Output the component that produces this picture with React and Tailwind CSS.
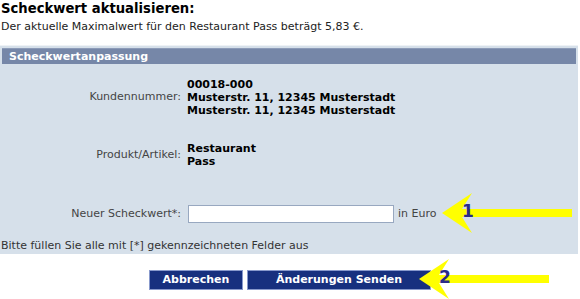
function Arrow({ label, className }) {
  return (
    <div className={`absolute ${className}`}>
      <svg width="130" height="40" viewBox="0 0 130 40">
        <polygon
          points="0,20 30,0 20,16 130,16 130,24 20,24 30,40"
          fill="#ffff00"
        />
      </svg>
      <span className="absolute left-[20px] top-[10px] text-[17px] font-bold leading-none text-[#2a2a8a]">
        {label}
      </span>
    </div>
  );
}

export default function App() {
  return (
    <div className="relative w-[580px] h-[299px] bg-white text-[11px] text-[#222] font-['DejaVu_Sans','Verdana',sans-serif] overflow-hidden">
      <h1 className="pl-[1px] text-[13.2px] font-bold leading-[18px] text-black">
        Scheckwert aktualisieren:
      </h1>
      <p className="pl-[1px] mt-[2px] leading-[14px]">
        Der aktuelle Maximalwert für den Restaurant Pass beträgt 5,83 €.
      </p>

      {/* Panel */}
      <div className="mt-[11px] w-[578px] bg-[#d6e0ea] border-t border-[#eef2f6] pt-[2px] pb-[1px]">
        <div className="mx-[2px] bg-[#7687a8] border-t border-[#8c9bb8] h-[16px] pl-[7px] text-[11px] font-bold leading-[15px] text-white">
          Scheckwertanpassung
        </div>

        <div className="mt-[14px] flex items-center">
          <div className="w-[184px] text-right pr-[3px] text-[#444]">Kundennummer:</div>
          <div className="ml-[3px] font-bold leading-[13px] text-black">
            <div>00018-000</div>
            <div>Musterstr. 11, 12345 Musterstadt</div>
            <div>Musterstr. 11, 12345 Musterstadt</div>
          </div>
        </div>

        <div className="mt-[25px] flex items-center">
          <div className="w-[184px] text-right pr-[3px] text-[#444]">Produkt/Artikel:</div>
          <div className="ml-[3px] font-bold leading-[13px] text-black">
            <div>Restaurant</div>
            <div>Pass</div>
          </div>
        </div>

        <div className="mt-[37px] flex items-center">
          <div className="w-[184px] text-right pr-[3px] text-[#444]">Neuer Scheckwert*:</div>
          <input
            type="text"
            className="ml-[4px] w-[206px] h-[18px] bg-white border border-[#98a8c0] outline-none"
          />
          <span className="ml-[4px] text-[#444]">in Euro</span>
        </div>

        <p className="mt-[16px] pl-[1px] leading-[14px] text-[#333]">
          Bitte füllen Sie alle mit [*] gekennzeichneten Felder aus
        </p>
      </div>

      <div className="mt-[16px] flex gap-[4px] pl-[149px]">
        <button className="w-[94px] h-[20px] bg-[#17307f] border border-[#8899cc] text-white font-bold text-[11px] leading-[18px]">
          Abbrechen
        </button>
        <button className="w-[184px] h-[20px] bg-[#17307f] border border-[#8899cc] text-white font-bold text-[11px] leading-[18px]">
          Änderungen Senden
        </button>
      </div>

      <Arrow label="1" className="left-[442px] top-[193px]" />
      <Arrow label="2" className="left-[419px] top-[259px]" />
    </div>
  );
}
